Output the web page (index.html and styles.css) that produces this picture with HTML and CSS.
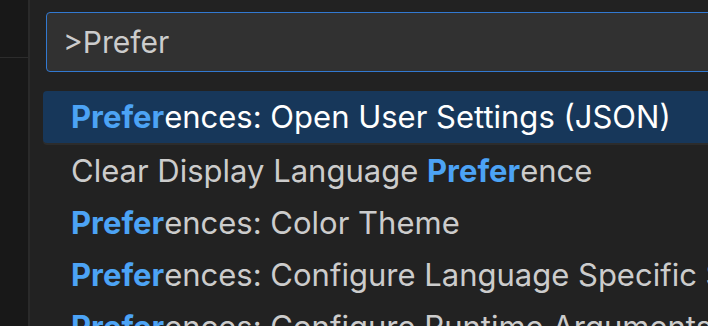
FILE: index.html
```html
<!DOCTYPE html>
<html lang="en">
<head>
    <meta charset="UTF-8">
    <title>Command Palette</title>
    <link rel="stylesheet" href="styles.css">
</head>
<body>
    <div class="sidebar">
        <div class="sidebar-head"></div>
    </div>
    <div class="quick-input">
        <div class="input-box">
            <span class="input-text">&gt;Prefer</span>
        </div>
        <ul class="result-list">
            <li class="result selected"><b class="hl">Prefer</b>ences: Open User Settings (JSON)</li>
            <li class="result">Clear Display Language <b class="hl">Prefer</b>ence</li>
            <li class="result"><b class="hl">Prefer</b>ences: Color Theme</li>
            <li class="result"><b class="hl">Prefer</b>ences: Configure Language Specific Settings...</li>
            <li class="result"><b class="hl">Prefer</b>ences: Configure Runtime Arguments</li>
        </ul>
    </div>
</body>
</html>
```

FILE: styles.css
```css
*, *::before, *::after {
    box-sizing: border-box;
}

body {
    margin: 0;
    height: 326px;
    overflow: hidden;
    background-color: #181818;
    display: flex;
    font-family: 'Inter', 'Noto Sans', sans-serif;
}

.sidebar {
    width: 30px;
    flex-shrink: 0;
    border-right: 2px solid #2a2a2a;
}

.sidebar-head {
    height: 58px;
    border-bottom: 1px solid #2c2c2c;
}

.quick-input {
    width: 900px;
    flex-shrink: 0;
    background-color: #222222;
    padding: 12px 0 0 16px;
}

.input-box {
    height: 60px;
    background-color: #313131;
    border: 1px solid #3279d1;
    border-radius: 4px;
    padding-left: 16px;
    display: flex;
    align-items: center;
}

.input-text {
    color: #cccccc;
    font-size: 30px;
}

.result-list {
    list-style: none;
    margin: 19px 0 0 -3px;
    padding: 0;
}

.result {
    height: 52px;
    line-height: 52px;
    padding-left: 28px;
    color: #cccccc;
    font-size: 31px;
    white-space: nowrap;
}

.result.selected {
    background-color: #17375a;
    color: #ffffff;
    border-radius: 4px;
    margin-bottom: 2px;
    box-shadow: 0 2px 0 #2c2c2c;
}

.hl {
    color: #4ca3f5;
    font-weight: 700;
}
```
